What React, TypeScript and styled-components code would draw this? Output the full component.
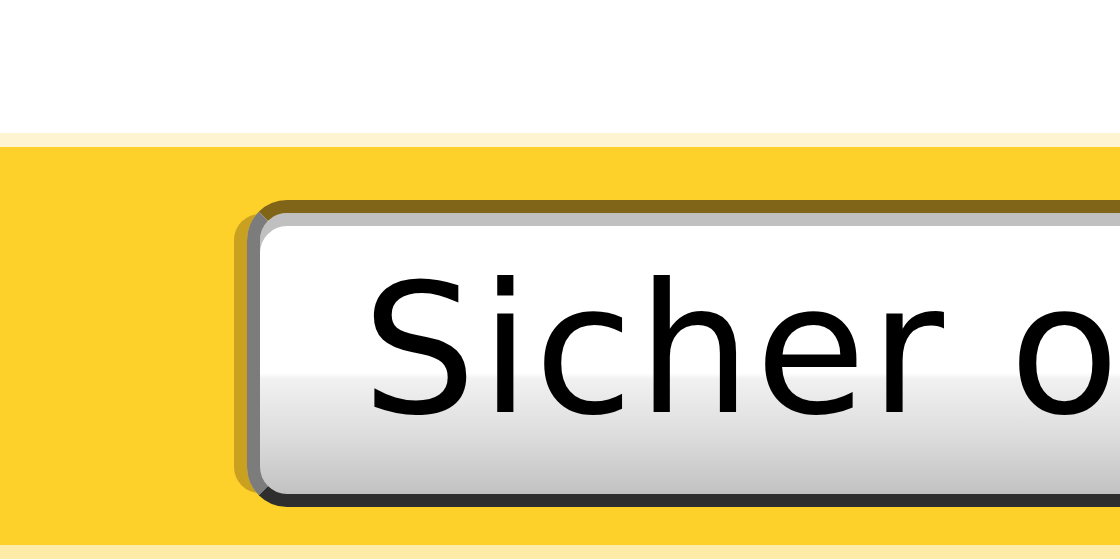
import styled, { createGlobalStyle } from "styled-components";

const yellow = "#FDD02A";

const GlobalStyle = createGlobalStyle`
  html, body {
    margin: 0;
    padding: 0;
    background: #ffffff;
    overflow: hidden;
  }
  #root {
    width: 1120px;
    height: 560px;
  }
`;

const Page = styled.div`
  display: flex;
  flex-direction: column;
  width: 1120px;
  height: 560px;
  overflow: hidden;
`;

const Header = styled.div`
  height: 133px;
  flex: none;
  background: #ffffff;
`;

const Rule = styled.div<{ $tone: string }>`
  height: 14px;
  flex: none;
  background: ${(p) => p.$tone};
`;

const Band = styled.div`
  flex: none;
  height: 398px;
  background: ${yellow};
  display: flex;
  align-items: flex-start;
  padding: 53px 0 0 247px;
  box-sizing: border-box;
`;

const Button = styled.button`
  flex: none;
  width: 1100px;
  height: 307px;
  box-sizing: border-box;
  margin: 0;
  padding: 0 0 9px 102px;
  border-style: solid;
  border-width: 13px 0 13px 13px;
  border-color: #806418 transparent #2e2e2e #7c7c7c;
  border-radius: 40px 0 0 40px;
  background: linear-gradient(
    to bottom,
    #ffffff 0%,
    #ffffff 57%,
    #f1f1f1 59%,
    #dedede 78%,
    #c2c2c2 100%
  );
  box-shadow: inset 0 13px 0 #c0c0c0, -27px 0 0 -14px #c9a020;
  font-family: "DejaVu Sans", Verdana, sans-serif;
  font-size: 180px;
  line-height: 274px;
  letter-spacing: 4px;
  color: #000000;
  text-align: left;
  white-space: nowrap;
  overflow: hidden;
  cursor: pointer;
`;

export default function App() {
  return (
    <Page>
      <GlobalStyle />
      <Header />
      <Rule $tone="#FFF4D2" />
      <Band>
        <Button>Sicher online</Button>
      </Band>
      <Rule $tone="#FFEBA8" />
    </Page>
  );
}
